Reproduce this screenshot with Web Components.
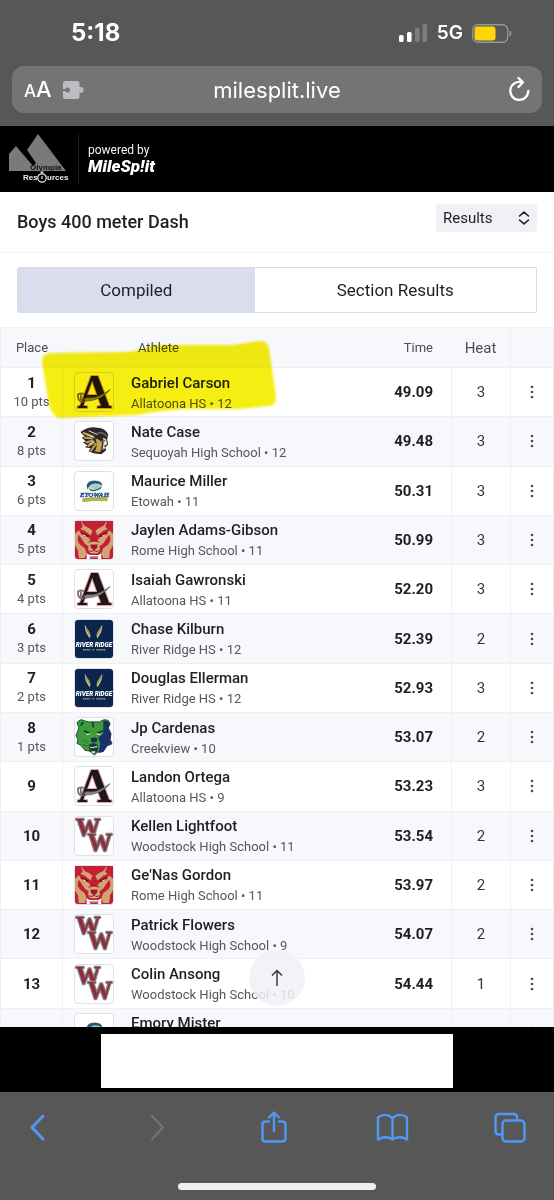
<!DOCTYPE html>
<html lang="en">
<head>
<meta charset="utf-8">
<meta name="viewport" content="width=device-width, initial-scale=1">
<title>Boys 400 meter Dash</title>
<style>
  body { margin: 0; font-family: Roboto, "Liberation Sans", sans-serif; color: #1d1f24; --chrome: #575757; --ui: Inter, "Liberation Sans", sans-serif; --line: #f0f0f4; --tint: #f7f8fc; }
</style>
</head>
<body>
<phone-screen>
  <status-bar slot="top" time="5:18" network="5G"></status-bar>
  <address-bar slot="top">milesplit.live</address-bar>
  <brand-header slot="top"></brand-header>
  <event-bar>Boys 400 meter Dash</event-bar>
  <view-tabs></view-tabs>
  <results-table></results-table>
  <scroll-top slot="float"></scroll-top>
  <ad-strip slot="bottom"></ad-strip>
  <tool-bar slot="bottom"></tool-bar>
</phone-screen>
<script>
function define(name, html) {
  customElements.define(name, class extends HTMLElement {
    connectedCallback() {
      if (this.shadowRoot) return;
      const root = this.attachShadow({ mode: 'open' });
      const t = document.createElement('template');
      t.innerHTML = typeof html === 'function' ? html(this) : html;
      root.append(t.content.cloneNode(true));
    }
  });
}
const BTN = 'button { appearance: none; border: 0; background: none; padding: 0; margin: 0; font: inherit; color: inherit; display: flex; align-items: center; justify-content: center; }';

define('phone-screen', `
<style>
  :host { display: flex; flex-direction: column; height: 100vh; background: #fff; }
  main { flex: 1; min-height: 0; position: relative; overflow: hidden; }
</style>
<slot name="top"></slot>
<main><slot></slot><slot name="float"></slot></main>
<slot name="bottom"></slot>`);

define('status-bar', el => `
<style>
  :host { display: flex; align-items: center; justify-content: space-between; height: 66px; padding: 0 42px 0 71px; background: var(--chrome); color: #fff; font-family: var(--ui); }
  .time { font-size: 24px; font-weight: 700; line-height: 28px; }
  .right { display: flex; align-items: center; gap: 9px; }
  .net { font-size: 19px; font-weight: 600; line-height: 24px; }
  svg { display: block; }
</style>
<span class="time">${el.getAttribute('time')}</span>
<span class="right">
  <svg width="29" height="18" viewBox="0 0 29 18" aria-label="Signal"><g fill="#fff"><rect x="0" y="11" width="4.600" height="7" rx="1.5"/><rect x="8" y="8" width="4.600" height="10" rx="1.5"/></g><g fill="#7c7c7c"><rect x="16" y="4" width="4.600" height="14" rx="1.5"/><rect x="23.500" y="0" width="4.600" height="18" rx="1.500"/></g></svg>
  <span class="net">${el.getAttribute('network')}</span>
  <svg width="40" height="19" viewBox="0 0 40 19" aria-label="Battery"><rect x=".75" y=".75" width="35" height="17.500" rx="5" fill="none" stroke="#989898" stroke-width="1.3"/><rect x="2.500" y="2.500" width="21" height="14" rx="3" fill="#fdd60a"/><path d="M37.500 6.500q2 .8 2 3t-2 3z" fill="#989898"/></svg>
</span>`);

define('address-bar', `
<style>
  ${BTN}
  :host { display: block; padding: 0 12px 13px; background: var(--chrome); color: #fff; font-family: var(--ui); }
  .bar { display: grid; grid-template-columns: 1fr auto 1fr; align-items: center; height: 47px; padding: 0 12px; border-radius: 12px; background: #747474; }
  .left { display: flex; align-items: center; gap: 11px; }
  .aa { font-weight: 500; font-size: 22px; line-height: 28px; align-items: baseline; }
  small { font-size: 17px; }
  .url { font-size: 22px; line-height: 28px; font-weight: 400; }
  .reload { justify-self: end; }
  svg { display: block; }
</style>
<div class="bar">
  <div class="left">
    <button class="aa" aria-label="Page settings"><small>A</small>A</button>
    <svg width="21" height="18" viewBox="0 0 21 18"><path fill="#bdbcc4" d="M2.500 0H14q2.500 0 2.500 2.500V6h1.200a2.600 2.600 0 1 1 0 5.800H16.500V15.500Q16.500 18 14 18H2.500Q0 18 0 15.500V10h2.200a2.500 2.500 0 1 0 0-2H0V2.500Q0 0 2.500 0z"/></svg>
  </div>
  <span class="url"><slot></slot></span>
  <button class="reload" aria-label="Reload"><svg width="22" height="26" viewBox="0 0 22 26" fill="none" stroke="#fff" stroke-width="2.300" stroke-linecap="round" stroke-linejoin="round"><path d="M13.500 5.200A9 9 0 1 0 20.300 14M10.500 1l4.500 4.300-4.500 4.700"/></svg></button>
</div>`);

define('brand-header', `
<style>
  :host { display: flex; align-items: center; height: 66px; padding-left: 8px; background: #000; color: #f2f2f2; }
  .club { padding-right: 9px; border-right: 1px solid #1d1d1d; }
  svg { display: block; }
  .by { display: flex; flex-direction: column; padding-left: 9px; font-size: 12px; line-height: 14px; }
  .mile { font-size: 17px; font-weight: 900; font-style: italic; line-height: 18px; color: #fff; }
</style>
<svg class="club" width="61" height="50" viewBox="0 0 61 50" role="img" aria-label="Olympia Resources">
  <path fill="#7a7a7a" d="M1 20 8 12 25 32 28 29 19 16 30 0 58 37H1z"/>
  <text x="22" y="36" font-family="Liberation Sans, sans-serif" font-size="8" font-weight="700" fill="#111">Olympia</text>
  <text x="15" y="46" font-family="Liberation Sans, sans-serif" font-size="8" font-weight="700" fill="#eee">Res</text>
  <text x="39" y="46" font-family="Liberation Sans, sans-serif" font-size="8" font-weight="700" fill="#eee">urces</text>
  <g fill="none" stroke="#eee" stroke-width="1.200"><circle cx="34" cy="44" r="4.200"/><path d="M34 42v3M32.500 38.200h3M34 38v1.500"/></g>
</svg>
<div class="by"><span>powered by</span><span class="mile">MileSp!it</span></div>`);

define('event-bar', `
<style>
  :host { display: flex; align-items: flex-start; justify-content: space-between; padding: 12px 17px 20px; border-bottom: 1px solid #f3f3f5; }
  h1 { margin: 8px 0 0; font-size: 17px; line-height: 20px; font-weight: 700; }
  h1 { font-size: 18px; font-weight: 500; }
  .pick { position: relative; display: block; }
  select { appearance: none; display: block; width: 101px; height: 28px; border: 0; border-radius: 3px; padding: 0 0 0 7px; background: #f0f1f7; color: #1d1f24; font: 15px/28px Roboto, sans-serif; }
  svg { position: absolute; right: 7px; top: 7px; pointer-events: none; }
</style>
<h1><slot></slot></h1>
<label class="pick"><select aria-label="View"><option>Results</option></select>
<svg width="12" height="14" viewBox="0 0 12 14" fill="none" stroke="#1d1f24" stroke-width="1.600" stroke-linecap="round" stroke-linejoin="round"><path d="M1.500 5 6 1.200 10.500 5M1.500 9 6 12.800 10.500 9"/></svg></label>`);

define('view-tabs', `
<style>
  ${BTN}
  :host { display: grid; grid-template-columns: 237fr 282fr; margin: 14px 17px; height: 46px; border: 1px solid #dadce2; border-radius: 3px 0 0 3px; box-sizing: border-box; }
  button { font-size: 17px; line-height: 22px; }
  .on { background: #d9dded; }
</style>
<button class="on" aria-pressed="true">Compiled</button><button aria-pressed="false">Section Results</button>`);

const SERIF = 'font-family="Liberation Serif, serif" font-weight="700"';
const LOGOS = {
  allatoona: `<text x="20" y="36" text-anchor="middle" ${SERIF} font-size="49" stroke="#e9a0a8" stroke-width="2" stroke-linejoin="round" paint-order="stroke" fill="#1c1819">A</text><path d="M8 26q14 2 28-9-8 11-25 12z" fill="#8f8c8e" stroke="#4a4446" stroke-width=".6"/><path d="M9 29Q3 31 3 22q4-2 6 0M6 22v6" fill="none" stroke="#777072" stroke-width="1.800"/>`,
  sequoyah: `<path fill="#2b2826" d="M6 10q9-6 17-4 8 0 11 7l-1 5 1 5-3 3 1 3-5 4-8-1-5-2 2-3-6-1 3-2-5-3 3-1-4-4 3-1-4-4z"/><path d="M8 11l11 4M9 16l9 1M11 21l8-2M13 25l7-4M16 30l6-8" stroke="#c99f51" stroke-width="2"/><path d="M14 9l9 4M12 13l8 3M14 23l6-3" stroke="#e5dfd2"/><path fill="#c99f51" d="M21 17q5 1 7 5l-2 9-6-1q4-4 1-13z"/><path fill="#f2e5d0" d="M29 16l3 2 1 5-3 1 1 3-3 2q2-7 1-13z"/><path d="M27 20l4-1M26 28h4M22 12q6-3 11 3" stroke="#6a6763" stroke-width="1.500" fill="none"/>`,
  etowah: `<ellipse cx="20" cy="14" rx="8" ry="5.500" fill="#d9e46b"/><path d="M12 15q0-6 8-6t8 5q-4-3-9-2-5 1-6 6z" fill="#29558f"/><ellipse cx="21" cy="15" rx="5" ry="2.500" fill="#9ecbe8"/><path d="M15 18q5 3 12-2" fill="none" stroke="#29558f" stroke-width="1.300"/><text x="20" y="25.500" text-anchor="middle" ${SERIF} font-size="7" font-style="italic" fill="#1d4a86" stroke="#1d4a86" stroke-width=".4">ETOWAH</text><path d="M8 27.500q12-2 25-1v3q-12-1-25 1z" fill="#b9b844" stroke="#8d9140" stroke-width=".6"/>`,
  rome: `<rect width="39" height="39" rx="3" fill="#c51f35"/><g fill="#d2b078"><path d="M7 0q1 5 7 7l4 3-2 5-6-5-8-3 6 8 6 2 3 5-2 5-5-4-6-9Q1 19 5 24l5 4 2 5-2 5H4l-1-8-3-5V12zM32 0q-1 5-7 7l-4 3 2 5 6-5 8-3-6 8-6 2-3 5 2 5 5-4 6-9q3 5-1 10l-5 4-2 5 2 5h6l1-8 3-5V12z" opacity=".92"/><path d="M15 23q4.500-4 9 0l2 7-3 3h-7l-3-3z"/></g><path fill="#c51f35" d="M0 0h6l2 6-8 7zM39 0h-6l-2 6 8 7zM16 3l3.500 5L23 3z"/><path d="M6 12l8 4M33 12l-8 4" stroke="#6f1020" stroke-width="1.600"/><path d="M8 14l3 1.500M31 14l-3 1.500" stroke="#f8e8d5"/><path d="M15.500 24h8l-1 4-3 2-3-2z" fill="#a31a2c"/><path d="M14 22q5.500-4 11 0M13 29q3 4 6.500 1 3.500 3 6.500-1" fill="none" stroke="#9b1a2c"/><path d="M12 39v-6l3 2h9l3-2v6h-3l-1-1h-7l-1 1z" fill="#fff"/><path d="M15 37h9" stroke="#58111c"/>`,
  river: `<rect width="39" height="39" rx="3" fill="#0b2450"/><path fill="#c9b97a" d="M10 5q0 6 2 9l3 5q2-4-1-8zM28 5q0 6-2 9l-3 5q-2-4 1-8z"/><path d="M11 8l4 7M27 8l-4 7" stroke="#57583f" stroke-width=".6"/><text x="19.500" y="27.500" text-anchor="middle" font-family="Roboto, sans-serif" font-size="6.500" font-weight="900" font-style="italic" fill="#fff">RIVER RIDGE</text><path d="M8 30.500h8M18 30.500h2M22 30.500h9" stroke="#a59c77" stroke-width="1.500" stroke-dasharray="1.400 .5"/>`,
  creek: `<path fill="#3f9c3a" stroke="#1d4633" stroke-width="1" d="M2 5q3-5 8-2l4 1h11l4-2q6-1 7 4l-2 4 3 6-1 6 2 4-5 2-4 6-6 1-3 3-5-4-5-1-4-5-4-2 1-4-2-4 3-8z"/><path fill="#19316a" d="M29 3q6-1 7 4l-2 4 3 6-1 6 2 4-5 2-4 6-5 1 2-9-2-7 5-4z"/><path d="M9 13l7 3M29 13l-7 3M18 4l1 6M6 8q1-3 3-3M33 8q-1-3-3-3" stroke="#153c2c" stroke-width="1.600" fill="none"/><path d="M12 17l4-1M22 16l4 1" stroke="#fff"/><path d="M16 21q4-2 7 0l-1 4h-5z" fill="#173351"/><path d="M14 28q5-4 10 0l-1 7-4 1-4-2z" fill="#173c32"/><path d="M15 29l2 1 5-1 1-1v2l-7 1zM17 34h4l-1 2h-3z" fill="#dce8d7"/><path d="M9 22l4 4M8 27l5 2" stroke="#1c603b"/>`,
  wood: `<g ${SERIF} font-size="25" stroke="#85858c" stroke-width="2.500" stroke-linejoin="round" paint-order="stroke" fill="#912c39"><text x="1" y="19">W</text><text x="13" y="35">W</text></g>`
};
define('school-logo', el => `
<style>
  :host { display: block; box-sizing: border-box; width: 40px; height: 40px; border: 1px solid #dfe1e6; border-radius: 4px; background: #fff; }
  svg { display: block; width: 100%; height: 100%; overflow: visible; }
</style>
<svg viewBox="0 0 39 39" role="img">${LOGOS[el.getAttribute('school')]}</svg>`);

const ROWS = [
  [1, 10, 'allatoona', 'Gabriel Carson', 'Allatoona HS • 12', '49.09', 3],
  [2, 8, 'sequoyah', 'Nate Case', 'Sequoyah High School • 12', '49.48', 3],
  [3, 6, 'etowah', 'Maurice Miller', 'Etowah • 11', '50.31', 3],
  [4, 5, 'rome', 'Jaylen Adams-Gibson', 'Rome High School • 11', '50.99', 3],
  [5, 4, 'allatoona', 'Isaiah Gawronski', 'Allatoona HS • 11', '52.20', 3],
  [6, 3, 'river', 'Chase Kilburn', 'River Ridge HS • 12', '52.39', 2],
  [7, 2, 'river', 'Douglas Ellerman', 'River Ridge HS • 12', '52.93', 3],
  [8, 1, 'creek', 'Jp Cardenas', 'Creekview • 10', '53.07', 2],
  [9, 0, 'allatoona', 'Landon Ortega', 'Allatoona HS • 9', '53.23', 3],
  [10, 0, 'wood', 'Kellen Lightfoot', 'Woodstock High School • 11', '53.54', 2],
  [11, 0, 'rome', "Ge'Nas Gordon", 'Rome High School • 11', '53.97', 2],
  [12, 0, 'wood', 'Patrick Flowers', 'Woodstock High School • 9', '54.07', 2],
  [13, 0, 'wood', 'Colin Ansong', 'Woodstock High School • 10', '54.44', 1],
  [14, 0, 'etowah', 'Emory Mister', 'Etowah • 11', '54.67', 2]
];
define('results-table', () => `
<style>
  ${BTN}
  :host { display: block; position: relative; }
  table { width: 100%; height: 731px; table-layout: fixed; border-collapse: separate; border-spacing: 0; }
  th, td { box-sizing: border-box; padding: 0; border-bottom: 1px solid var(--line); }
  th { height: 41px; font-size: 13px; line-height: 20px; font-weight: 400; color: #4c4e55; background: var(--tint); border-top: 1px solid #f1f1f5; }
  td { height: 49px; }
  tr:nth-child(even) td { background: var(--tint); }
  .place { width: 63px; text-align: center; border-left: 1px solid var(--line); }
  td.place { border-right: 1px solid var(--line); }
  .logo { width: 61px; padding-left: 11px; }
  th.ath { text-align: left; padding-left: 14px; }
  td.ath { padding-left: 7px; }
  .time { width: 68px; text-align: right; padding-right: 18px; }
  td.time { font-size: 15px; font-weight: 700; }
  .heat { width: 59px; text-align: center; font-size: 15px; }
  td.heat { border-left: 1px solid var(--line); color: #33353b; }
  .more { width: 44px; border-left: 1px solid var(--line); border-right: 1px solid var(--line); }
  td button { width: 100%; height: 40px; }
  b { display: block; font-size: 15px; line-height: 20px; font-weight: 500; color: #1d1f24; }
  .place b { line-height: 18px; font-weight: 700; }
  .ath b { line-height: 22px; }
  span { display: block; font-size: 13px; line-height: 19px; color: #55575e; white-space: nowrap; }
  .mark { position: absolute; left: 36px; top: 8px; mix-blend-mode: multiply; pointer-events: none; filter: blur(1px); }
</style>
<table>
<thead><tr><th class="place">Place</th><th class="logo"></th><th class="ath">Athlete</th><th class="time">Time</th><th class="heat">Heat</th><th class="more"></th></tr></thead>
<tbody>${ROWS.map(([p, pts, s, n, sub, t, h]) => `<tr><td class="place"><b>${p}</b>${pts ? `<span>${pts} pts</span>` : ''}</td><td class="logo"><school-logo school="${s}"></school-logo></td><td class="ath"><b>${n}</b><span>${sub}</span></td><td class="time">${t}</td><td class="heat">${h}</td><td class="more"><button aria-label="More"><svg width="4" height="14" viewBox="0 0 4 14" fill="#4a4c52"><circle cx="2" cy="2" r="1.300"/><circle cx="2" cy="7" r="1.300"/><circle cx="2" cy="12" r="1.300"/></svg></button></td></tr>`).join('')}</tbody>
</table>
<svg class="mark" width="244" height="86" viewBox="0 0 244 86"><path fill="#f6ee12" d="M6 28Q5 19 15 18L88 17Q104 16 118 10L196 10 222 6Q231 5 233 13L240 62Q241 70 232 71L204 74 150 74Q120 76 100 80L24 83Q15 82 12 64z"/></svg>`);

define('scroll-top', `
<style>
  ${BTN}
  :host { position: absolute; left: calc(50% - 28px); bottom: 21px; }
  button { width: 56px; height: 56px; border-radius: 50%; background: rgba(240, 241, 248, .85); }
</style>
<button aria-label="Back to top"><svg width="14" height="18" viewBox="0 0 14 18" fill="none" stroke="#303238" stroke-width="1.400"><path d="M7 17V2M2 6.500 7 1.500 12 6.500"/></svg></button>`);

define('ad-strip', `
<style>
  :host { display: flex; justify-content: center; padding: 7px 0 4px; background: #000; }
  div { width: 352px; height: 54px; background: #fff; }
</style><div></div>`);

define('tool-bar', `
<style>
  ${BTN}
  :host { display: flex; flex-direction: column; align-items: center; height: 98px; padding-bottom: 10px; background: var(--chrome); color: #5098f8; }
  nav { display: flex; justify-content: space-between; box-sizing: border-box; width: 100%; padding: 18px 27px 0 21px; }
  button { width: 34px; height: 34px; }
  .off { color: #747474; }
  svg { display: block; fill: none; stroke: currentColor; stroke-width: 3; stroke-linecap: round; stroke-linejoin: round; }
  i { display: block; width: 198px; height: 7px; margin-top: auto; border-radius: 4px; background: #f0f0f0; }
</style>
<nav>
  <button aria-label="Back"><svg width="34" height="34" viewBox="0 0 34 34"><path d="M22 6 11 17.500 22 29"/></svg></button>
  <button class="off" aria-label="Forward"><svg width="34" height="34" viewBox="0 0 34 34" style="stroke-width:2.400"><path d="M13 6l11 11.500L13 29"/></svg></button>
  <button aria-label="Share"><svg width="34" height="34" viewBox="0 0 34 34" style="stroke-width:2.400"><path d="M12 11.500H8.500Q5.500 11.500 5.500 14.500V28.500Q5.500 31.500 8.500 31.500H25.500Q28.500 31.500 28.500 28.500V14.500Q28.500 11.500 25.500 11.500H22M17 21V3M12 7.500 17 2.500 22 7.500"/></svg></button>
  <button aria-label="Bookmarks"><svg width="34" height="34" viewBox="0 0 34 34" style="stroke-width:2.400"><path d="M17.500 8Q10 2 3 7.500V29.500Q10.500 25 17.500 29.500 24.500 25 32 29.500V7.500Q25 2 17.500 8V29"/></svg></button>
  <button aria-label="Tabs"><svg width="34" height="34" viewBox="0 0 34 34" style="stroke-width:2.400"><rect x="9.500" y="10.500" width="22" height="21" rx="3.500"/><path d="M8.500 24.500H6Q2.500 24.500 2.500 21V7.500Q2.500 4 6 4H20.500Q24 4 24 7.500V9"/></svg></button>
</nav>
<i></i>`);
</script>
</body>
</html>
